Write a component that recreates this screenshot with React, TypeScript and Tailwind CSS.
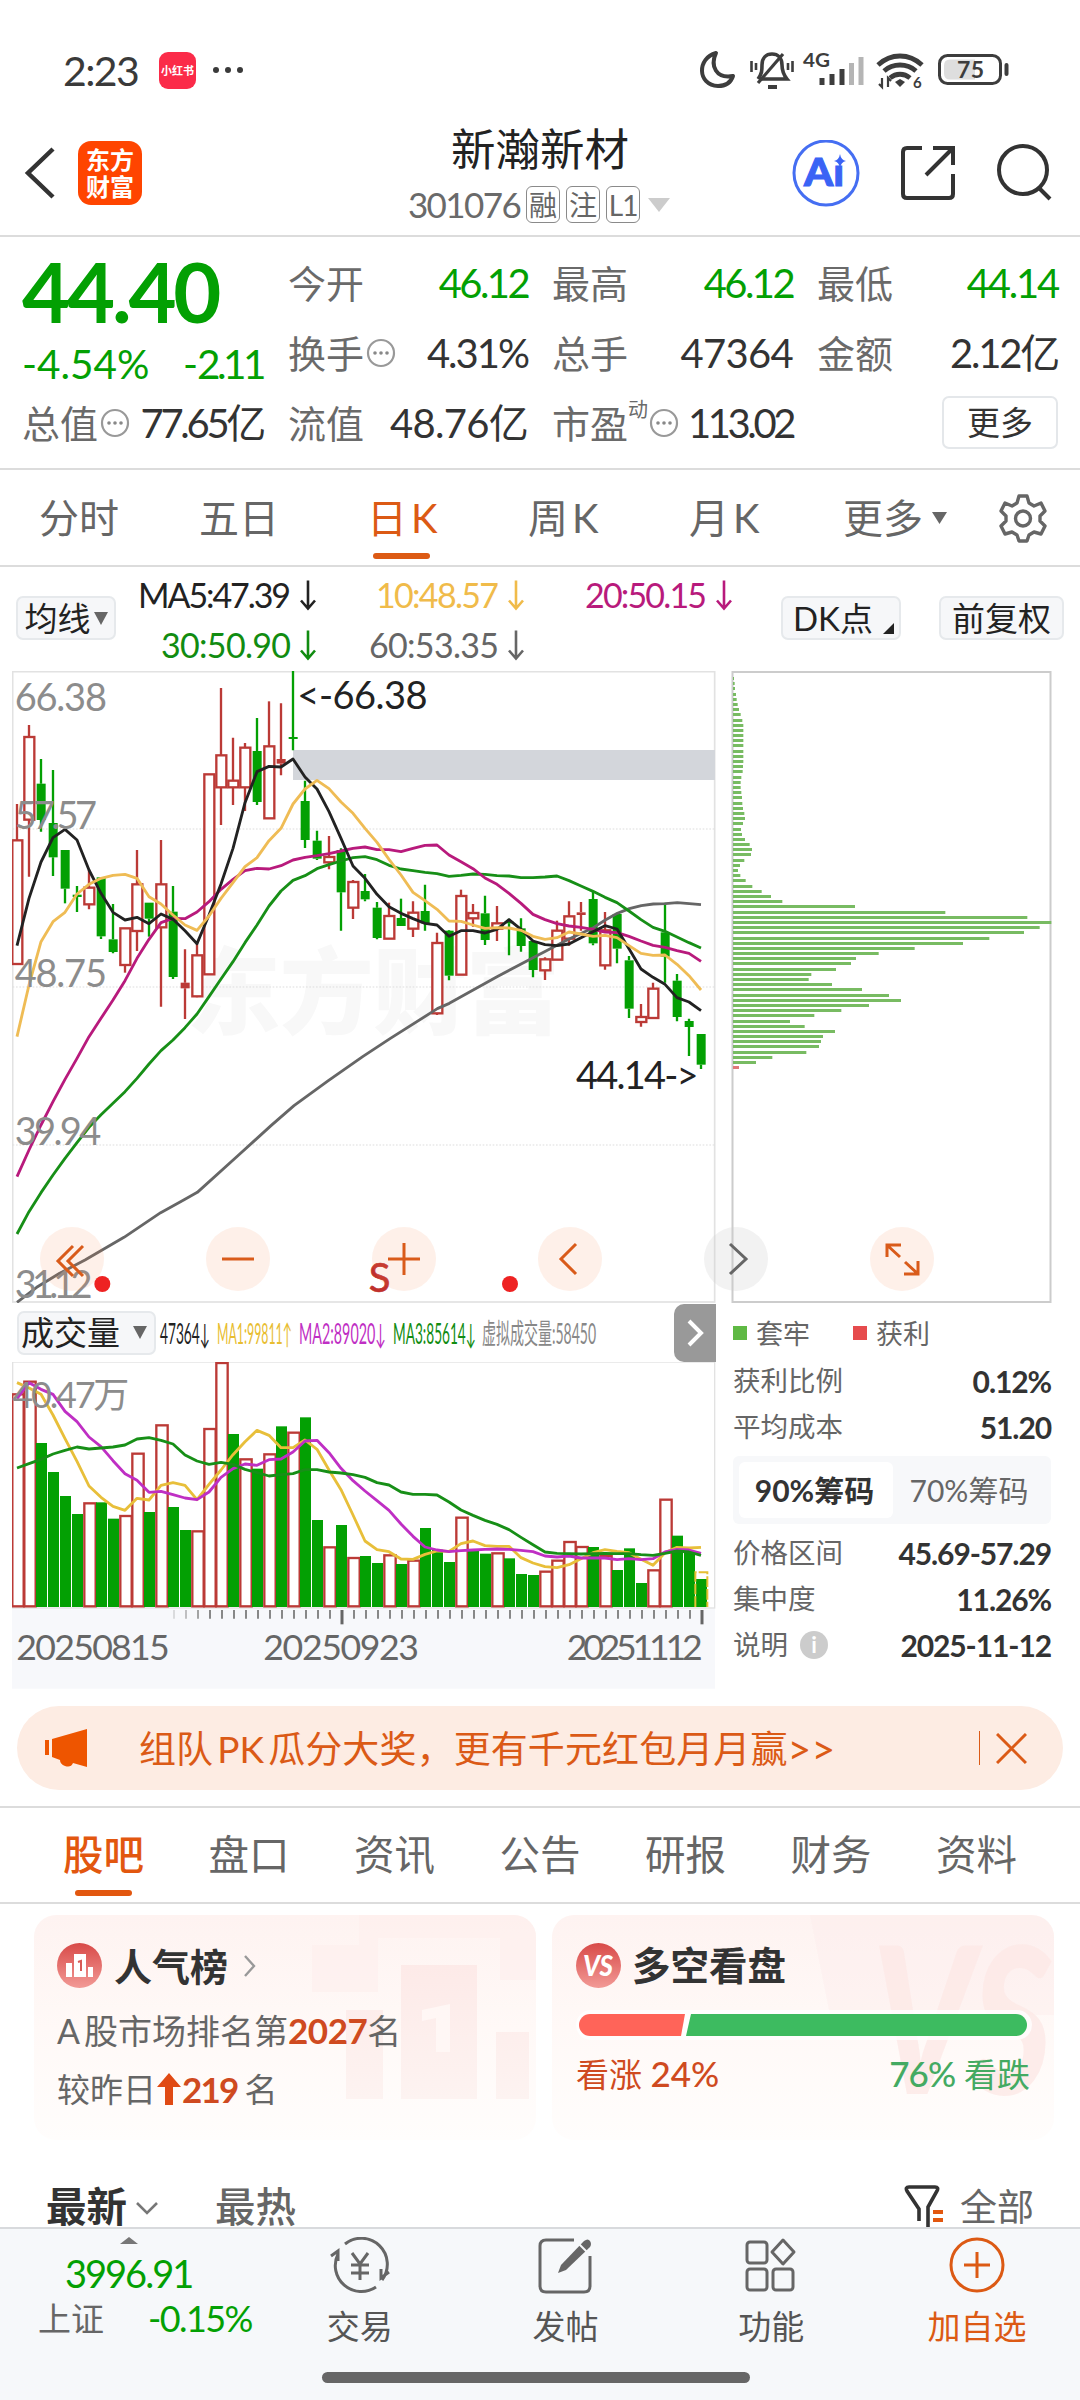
import type { ReactNode } from 'react'

type Kind = 'r' | 'g' | 's'
type Candle = [Kind, number, number, number, number]

// [kind, high, body top, body bottom, low] in chart units; r = hollow, g = falling, s = solid red
const CANDLES: Candle[] = [
  ['r', 432, 540, 911, 911], ['r', 195, 230, 478, 650], ['g', 297, 371, 480, 515], ['g', 330, 489, 592, 648],
  ['g', 570, 570, 686, 730], ['g', 678, 704, 711, 756], ['r', 630, 682, 732, 748], ['g', 652, 652, 829, 837],
  ['g', 732, 838, 876, 880], ['r', 804, 804, 914, 938], ['r', 570, 672, 812, 873], ['g', 728, 728, 776, 830],
  ['r', 540, 672, 801, 1040], ['g', 678, 755, 951, 957], ['s', 868, 968, 985, 1077], ['r', 850, 885, 1008, 1012],
  ['r', 342, 342, 942, 942], ['r', 84, 285, 381, 495], ['r', 233, 361, 381, 435], ['r', 249, 262, 381, 453],
  ['g', 174, 273, 426, 435], ['r', 124, 258, 474, 474], ['s', 130, 297, 311, 346], ['g', 33, 231, 237, 271],
  ['g', 362, 423, 540, 564], ['g', 512, 542, 596, 600], ['r', 528, 590, 606, 628], ['g', 565, 570, 697, 812],
  ['r', 660, 665, 742, 777], ['g', 642, 693, 718, 724], ['g', 726, 743, 834, 838], ['r', 728, 767, 835, 835],
  ['g', 716, 774, 798, 798], ['r', 724, 757, 805, 831], ['g', 674, 753, 790, 812], ['r', 818, 848, 1059, 1065],
  ['g', 810, 812, 947, 961], ['r', 689, 707, 943, 943], ['r', 732, 758, 774, 800], ['g', 707, 760, 840, 855],
  ['r', 738, 789, 805, 843], ['g', 776, 785, 790, 886], ['g', 775, 805, 858, 875], ['g', 840, 843, 930, 952],
  ['r', 892, 897, 930, 960], ['r', 782, 811, 898, 898], ['r', 724, 768, 835, 857], ['s', 726, 757, 765, 812],
  ['g', 695, 717, 850, 856], ['r', 756, 810, 915, 929], ['g', 760, 762, 866, 910], ['g', 888, 901, 1046, 1074],
  ['r', 1032, 1070, 1085, 1100], ['r', 968, 985, 1073, 1076], ['g', 728, 817, 890, 968], ['g', 942, 962, 1071, 1084],
  ['g', 1076, 1083, 1101, 1188], ['g', 1122, 1122, 1214, 1227],
]

const MA5 = [857, 715, 606, 533, 508, 540, 630, 700, 757, 780, 772, 791, 762, 778, 812, 851, 765, 672, 565, 428, 335, 319, 321, 297, 351, 387, 455, 535, 618, 655, 703, 740, 760, 776, 790, 795, 829, 812, 812, 819, 808, 779, 808, 843, 854, 857, 852, 833, 815, 797, 807, 866, 927, 952, 973, 1013, 1026, 1052]
const MA10 = [1130, 975, 845, 785, 757, 702, 673, 655, 646, 643, 655, 710, 732, 765, 795, 811, 768, 715, 668, 620, 593, 542, 505, 432, 387, 361, 386, 426, 460, 505, 547, 598, 645, 697, 722, 748, 783, 784, 795, 805, 803, 804, 811, 829, 838, 833, 816, 822, 829, 826, 833, 857, 880, 886, 885, 913, 947, 990]
const MA20 = [1550, 1470, 1395, 1325, 1258, 1195, 1130, 1075, 1020, 962, 895, 838, 788, 775, 776, 756, 725, 688, 658, 632, 625, 627, 617, 600, 592, 587, 581, 573, 565, 561, 569, 569, 575, 565, 556, 555, 585, 605, 626, 654, 673, 700, 730, 763, 779, 791, 798, 802, 808, 816, 818, 829, 843, 856, 862, 872, 880, 904]
const MA30 = [1722, 1655, 1598, 1545, 1495, 1448, 1402, 1364, 1330, 1295, 1255, 1212, 1172, 1140, 1103, 1062, 1010, 957, 905, 848, 795, 738, 693, 661, 647, 626, 614, 603, 593, 590, 599, 616, 627, 632, 637, 641, 649, 646, 642, 643, 647, 648, 653, 653, 651, 648, 662, 678, 694, 712, 728, 753, 779, 802, 814, 831, 848, 864]
const MA60 = '51,1927 110,1882 179,1840 255,1800 372,1732 482,1658 551,1620 592,1597 716,1485 771,1435 813,1397 882,1337 985,1262 1088,1190 1170,1136 1312,1046 1348,1030 1491,950 1599,893 1707,837 1780,803 1816,780 1852,760 1888,746 1924,737 1960,732 1996,731 2032,728 2068,731 2103,734'

const VOLUME = 'r160 r122 g309 g396 g468 g522 r487 g487 g536 r525 r338 g516 r253 g501 g570 r571 r264 r66 g282 r355 g386 r340 g259 r275 g232 g540 r619 g555 r651 g648 g669 r643 g672 r659 g564 g629 g666 r530 g632 g641 r637 g655 g702 g705 r692 r659 r603 r618 g621 r645 g690 g625 g729 r688 r476 g587 g637 g717'
  .split(' ')
  .map((v) => ({ up: v[0] === 'r', top: Number(v.slice(1)) }))
const VMA1 = [128, 144, 163, 225, 296, 364, 438, 472, 499, 511, 475, 480, 436, 428, 436, 479, 433, 390, 344, 305, 271, 286, 323, 323, 300, 328, 390, 449, 525, 603, 629, 635, 657, 658, 643, 633, 634, 611, 603, 617, 619, 619, 653, 669, 680, 683, 674, 656, 638, 629, 634, 638, 658, 676, 638, 622, 624, 622]
const VMA2 = [176, 128, 148, 163, 214, 245, 291, 320, 362, 401, 421, 457, 454, 464, 474, 479, 456, 412, 386, 372, 376, 359, 357, 336, 303, 301, 338, 385, 422, 453, 482, 511, 552, 589, 621, 630, 635, 632, 630, 628, 627, 628, 631, 635, 648, 651, 648, 654, 654, 654, 659, 656, 659, 656, 636, 628, 630, 640]
const VMA3 = [384, 371, 358, 342, 331, 321, 327, 324, 321, 315, 297, 293, 301, 312, 345, 363, 373, 367, 373, 388, 398, 408, 404, 401, 389, 389, 396, 399, 404, 412, 428, 435, 456, 463, 463, 465, 486, 510, 526, 541, 553, 569, 592, 614, 636, 640, 641, 642, 641, 640, 641, 641, 644, 646, 640, 633, 636, 646]

const CHIPS = [3, 5, 6, 9, 11, 14, 18, 23, 28, 31, 31, 31, 31, 31, 31, 31, 31, 30, 29, 25, 23, 23, 25, 27, 28, 30, 34, 36, 30, 24, 27, 36, 50, 57, 54, 34, 21, 15, 22, 38, 58, 86, 114, 148, 366, 637, 883, 955, 920, 873, 769, 690, 545, 437, 369, 354, 309, 235, 227, 297, 387, 468, 504, 408, 325, 244, 171, 215, 306, 270, 264, 258, 220, 118, 69, 18]

const cx = (i: number) => 51 + 36 * i
const line = (values: number[]) => values.map((v, i) => `${cx(i)},${v}`).join(' ')

const RED = '#bb3a36'
const GREEN = '#03a003'

function StatusBar() {
  return (
    <div className="flex h-[140px] items-center px-[63px]">
      <span className="w-[96px] text-[41px] leading-none tracking-[-1.600px] text-[#3a3a3a]">2:23</span>
      <span className="flex size-[37px] items-center justify-center rounded-[9px] bg-[#fb2b49] text-[11px] leading-none font-bold text-white">小红书</span>
      <span className="ml-[17px] flex gap-[6px]">
        <i className="size-[6px] rounded-full bg-[#3a3a3a]" />
        <i className="size-[6px] rounded-full bg-[#3a3a3a]" />
        <i className="size-[6px] rounded-full bg-[#3a3a3a]" />
      </span>
      <svg className="mr-[3px] ml-auto" width="316" height="44" viewBox="698 48 316 44" fill="none" stroke="#3d3d3d" strokeWidth="4">
        <path d="M716 53C697 58 697 85 718 86c8 0 13-4 15-10-17 3-23-10-17-23Z" strokeLinejoin="round" />
        <path d="M760 79h27c-4-5-5-9-5-14 0-7-4-11-10-11s-10 4-10 11c0 5 0 9-4 14" strokeWidth="3.6" />
        <path d="M783 54 758 83" strokeWidth="3.2" />
        <path d="M768 87h9" strokeWidth="4" />
        <path d="M751.500 61v11M756 63v7M792.500 61v11M788 63v7" strokeWidth="2.600" />
        <text x="803" y="67" fontSize="19" fontWeight="700" fill="#3d3d3d" stroke="none" textLength="27" lengthAdjust="spacingAndGlyphs">4G</text>
        <path d="M822 78v7M832 74v11M842 69v16" strokeWidth="5" />
        <path d="M851.500 63v22M861 57v28" stroke="#b5b5b5" strokeWidth="5" />
        <path d="M878 65c13-12 31-12 44 0M884 71c9-8 23-8 32 0M890 78c6-5 14-5 20 0" strokeWidth="4.800" />
        <path d="m895 82 5-3 5 3-5 5Z" fill="#3d3d3d" stroke="none" />
        <path d="M882 78v9l-3-3M888 87v-9l3 3" strokeWidth="2.200" />
        <text x="913" y="88" fontSize="15" fontWeight="700" fill="#3d3d3d" stroke="none">6</text>
        <rect x="939.500" y="55.500" width="61" height="28" rx="8" strokeWidth="3" />
        <path d="M950 59.500h25v20h-25q-6 0-6-6v-8q0-6 6-6Z" fill="#dedede" stroke="none" />
        <path d="M1006.500 65v9" strokeWidth="4" strokeLinecap="round" />
        <text x="957" y="77.500" fontSize="23" fontWeight="700" fill="#3d3d3d" stroke="none" textLength="27">75</text>
      </svg>
    </div>
  )
}

function Tag({ children }: { children: ReactNode }) {
  return <span className="flex h-[37px] w-[34px] items-center justify-center rounded-[6px] border border-[#8a8a8a] text-[28px] leading-none text-[#666]">{children}</span>
}

function Header() {
  return (
    <header className="flex h-[97px] items-start border-b-[2px] border-[#dcdcdc] pl-[24px]">
      <svg className="mt-[7px] shrink-0" width="32" height="52" viewBox="0 0 32 52" fill="none" stroke="#333" strokeWidth="4.500">
        <path d="M29 2 4 26l25 24" />
      </svg>
      <div className="mt-[1px] ml-[22px] flex size-[64px] shrink-0 flex-col items-center justify-center rounded-[13px] bg-[#ff4500] text-[24px] leading-[27px] font-bold text-white">
        <span>东方</span>
        <span>财富</span>
      </div>
      <div className="-mt-[16px] ml-[257px] flex w-[280px] flex-col items-center">
        <h1 className="pl-[2px] text-[44.500px] leading-[50px] text-[#222]">新瀚新材</h1>
        <div className="mt-[12px] flex items-center gap-[6px]">
          <span className="text-[35px] leading-[37px] tracking-[-1.600px] text-[#6a6a6a]">301076</span>
          <Tag>融</Tag>
          <Tag>注</Tag>
          <Tag><span className="tracking-[-1px]">L1</span></Tag>
          <svg className="ml-[2px]" width="22" height="14"><path d="M0 0h22L11 14Z" fill="#ccc" /></svg>
        </div>
      </div>
      <svg className="mr-[27px] ml-auto" width="262" height="68" viewBox="791 140 262 68" fill="none">
        <circle cx="826" cy="173" r="32" stroke="#456ef2" strokeWidth="3" />
        <text x="804" y="186" fontSize="37" fontWeight="900" fill="#3a63f5" stroke="#3a63f5" strokeWidth="1" textLength="40" lengthAdjust="spacingAndGlyphs">Aı</text>
        <path d="M840 154q1 6 6 7-5 1-6 7-1-6-6-7 5-1 6-7Z" fill="#3a63f5" />
        <g stroke="#333" strokeWidth="4">
          <path d="M922 148h-15q-4 0-4 4v42q0 4 4 4h42q4 0 4-4v-20M926 175l27-27M933 148h20v17" />
          <circle cx="1023" cy="170" r="24" />
          <path d="m1038 187 12 12" />
        </g>
      </svg>
    </header>
  )
}

function Dots() {
  return (
    <svg className="ml-[2px] shrink-0" width="30" height="30" viewBox="0 0 30 30">
      <circle cx="15" cy="15" r="13" fill="none" stroke="#999" strokeWidth="2.200" />
      <circle cx="9" cy="15" r="1.800" fill="#888" />
      <circle cx="15" cy="15" r="1.800" fill="#888" />
      <circle cx="21" cy="15" r="1.800" fill="#888" />
    </svg>
  )
}

interface StatProps {
  label: string
  value: string
  info?: boolean
  sup?: string
  down?: boolean
  tracking?: string
}

function Stat({ label, value, info, sup, down, tracking = 'tracking-[-1.700px]' }: StatProps) {
  return (
    <div className="flex h-[70px] items-center leading-none">
      <span className="shrink-0 text-[38px] text-[#6a6a6a]">{label}</span>
      {sup && <sup className="-top-[14px] -mr-[1px] text-[20px] text-[#6a6a6a]">{sup}</sup>}
      {info && <Dots />}
      <span className={`ml-auto text-[40px] whitespace-nowrap ${tracking} ${down ? 'text-[#03a003]' : 'text-[#333]'}`}>{value}</span>
    </div>
  )
}

function Quote() {
  return (
    <section className="flex h-[233px] border-b-[2px] border-[#dcdcdc] pt-[11px] pl-[22px] text-[#333]">
      <div className="w-[241px]">
        <div className="flex h-[86px] items-center text-[83px] leading-none font-bold tracking-[-3.200px] text-[#03a003]">44.40</div>
        <div className="flex h-[54px] items-center justify-between pt-[6px] text-[40.500px] leading-none text-[#03a003]">
          <span>-4.54%</span>
          <span className="tracking-[-3.500px]"><span className="tracking-[-1px]">-</span>2.11</span>
        </div>
        <Stat label="总值" value="77.65亿" info tracking="tracking-[-3.300px]" />
      </div>
      <div className="ml-[25px] w-[240px]">
        <Stat label="今开" value="46.12" down tracking="tracking-[-2.600px]" />
        <Stat label="换手" value="4.31%" info tracking="tracking-[-2px]" />
        <Stat label="流值" value="48.76亿" tracking="tracking-[-0.700px]" />
      </div>
      <div className="ml-[24px] w-[241px]">
        <Stat label="最高" value="46.12" down tracking="tracking-[-2.600px]" />
        <Stat label="总手" value="47364" tracking="tracking-[-0.700px]" />
        <Stat label="市盈" value="113.02" sup="动" info tracking="tracking-[-3.400px]" />
      </div>
      <div className="ml-[24px] w-[241px]">
        <Stat label="最低" value="44.14" down tracking="tracking-[-2.200px]" />
        <Stat label="金额" value="2.12亿" tracking="tracking-[-2.200px]" />
        <div className="flex h-[68px] items-center justify-end">
          <button className="h-[53px] w-[116px] rounded-[7px] border-[2px] border-[#e4e7ea] text-[33px] leading-none">更多</button>
        </div>
      </div>
    </section>
  )
}

function PeriodTabs() {
  return (
    <nav className="relative flex h-[97px] items-center border-b-[2px] border-[#dcdcdc] text-[40px] leading-none text-[#666]">
      <span className="ml-[39px] w-[160px]">分时</span>
      <span className="w-[168px]">五日</span>
      <span className="w-[161px] tracking-[4px] text-[#dc5a14]">日K</span>
      <span className="w-[161px] tracking-[4px]">周K</span>
      <span className="w-[154px] tracking-[4px]">月K</span>
      <span>更多</span>
      <svg className="ml-[9px]" width="15" height="12"><path d="M0 0h15L7.500 12Z" fill="#666" /></svg>
      <svg className="ml-[51px]" width="50" height="50" viewBox="0 0 50 50" fill="none" stroke="#666" strokeWidth="3.400" strokeLinejoin="round">
        <path d="M21 3h8l2 7 5 3 7-3 4 8-5 5v5l5 5-4 8-7-2-5 3-2 6h-8l-2-6-5-3-7 2-4-8 5-5v-5l-5-5 4-8 7 3 5-3Z" />
        <circle cx="25" cy="25.500" r="7.500" />
      </svg>
      <i className="absolute bottom-[6px] left-[373px] h-[6px] w-[57px] rounded-full bg-[#dc5a14]" />
    </nav>
  )
}

const PILL = 'flex h-[44px] items-center rounded-[7px] border-[2px] border-[#e6e9ec] bg-[#f6f7f9] text-[33px] leading-none text-[#222]'

function MaLegend() {
  return (
    <div className="flex h-[104px] items-start pl-[16px] text-[33px] leading-none">
      <div className={`mt-[29px] w-[100px] justify-center ${PILL}`}>
        均线
        <svg className="ml-[3px]" width="14" height="13"><path d="M0 0h14L7 13Z" fill="#666" /></svg>
      </div>
      <svg className="mt-[7px] ml-[14px]" width="620" height="92" viewBox="130 573.500 620 92" fontSize="34">
        <LegendText x={138} y={607} w={153} color="#222">MA5:47.39</LegendText>
        <LegendText x={161} y={657} w={130} color="#118c11">30:50.90</LegendText>
        <LegendText x={376} y={607} w={123} color="#f0bb4a">10:48.57</LegendText>
        <LegendText x={369} y={657} w={130} color="#666">60:53.35</LegendText>
        <LegendText x={585} y={607} w={122} color="#b81a7c">20:50.15</LegendText>
      </svg>
      <div className={`relative mt-[29px] ml-[31px] w-[120px] pl-[10px] ${PILL}`}>
        <span className="text-[33px]">DK点</span>
        <svg className="absolute right-[5px] bottom-[4px]" width="11" height="11"><path d="M11 0v11H0Z" fill="#222" /></svg>
      </div>
      <div className={`mt-[29px] ml-[38px] w-[125px] justify-center ${PILL}`}>前复权</div>
    </div>
  )
}

function LegendText({ x, y, w, color, children }: { x: number; y: number; w: number; color: string; children: string }) {
  const ax = x + w + 17
  return (
    <g>
      <text x={x} y={y} textLength={w} fill={color}>{children}</text>
      <path d={`M${ax} ${y - 27}v28M${ax - 7} ${y - 7}l7 8 7-8`} fill="none" stroke={color} strokeWidth="2.600" />
    </g>
  )
}

function CandleChart() {
  return (
    <svg width="704" height="632" viewBox="36 33 2112 1896" fontSize="114">
      <rect x="38" y="35" width="2106" height="1891" fill="#fff" stroke="#e2e2e2" strokeWidth="5" />
      <text x="560" y="1100" fontSize="282" fontWeight="900" fill="#f8f8f8" textLength="1120">东方财富</text>
      <path d="M38 507h2106M38 981h2106M38 1455h2106" stroke="#ddd" strokeWidth="3" strokeDasharray="5 5" />
      <rect x="879" y="270" width="1266" height="90" fill="#d3d6db" />
      {CANDLES.map(([kind, high, top, bottom, low], i) => {
        const color = kind === 'g' ? GREEN : RED
        return (
          <g key={i} stroke={color} strokeWidth="7">
            <path d={`M${cx(i)} ${high}V${top}M${cx(i)} ${bottom}V${low}`} />
            <rect
              x={cx(i) - (kind === 'r' ? 14 : 13)}
              y={kind === 'r' ? top + 1 : top}
              width={kind === 'r' ? 30 : 27}
              height={bottom - top}
              fill={kind === 'r' ? '#fff' : color}
              strokeWidth={kind === 'r' ? 7 : 0}
            />
          </g>
        )
      })}
      <g fill="none" strokeWidth="8.500" strokeLinejoin="round">
        <polyline points={MA60} stroke="#666" />
        <polyline points={line(MA30)} stroke="#178f17" />
        <polyline points={line(MA20)} stroke="#b81a7c" />
        <polyline points={line(MA5)} stroke="#222" />
        <polyline points={line(MA10)} stroke="#efbc55" />
      </g>
      <g fill="#8c8c8c">
        <text x="44" y="154" textLength="277">66.38</text>
        <text x="44" y="508" textLength="247">57.57</text>
        <text x="44" y="982" textLength="277">48.75</text>
        <text x="44" y="1456" textLength="260">39.94</text>
        <text x="44" y="1914" textLength="234">31.12</text>
      </g>
      <g fill="#222">
        <text x="892" y="148" textLength="391">&lt;-66.38</text>
        <text x="1728" y="1288" textLength="368">44.14-&gt;</text>
      </g>
      <text x="1106" y="1896" fontSize="120" fill="#c0302c" stroke="#c0302c" strokeWidth="2">S</text>
      <circle cx="307" cy="1872" r="24" fill="#ee2222" />
      <circle cx="1530" cy="1872" r="24" fill="#ee2222" />
    </svg>
  )
}

function ChipChart() {
  return (
    <svg width="322" height="632" viewBox="731 671 322 632">
      <rect x="732.500" y="672" width="318" height="630" fill="#fff" stroke="#ccc" strokeWidth="2" />
      {CHIPS.map((len, i) => (
        <rect key={i} x="733" y={Math.round(677 + i * 5.19)} width={len / 3} height="3" fill={i === 75 ? '#e0787a' : '#78bb62'} />
      ))}
    </svg>
  )
}

function ChartButtons() {
  const icons = [
    'M33 19 18 34l15 15M43 19 28 34l15 15',
    'M16 32h32',
    'M16 32h32M32 16v32',
    'M38 17 23 32l15 15',
    'M26 17l16 15-16 15',
    'M17 30V18h14M18 19l12 11M48 34v13H34M47 46 35 35',
  ]
  return (
    <div className="absolute top-[556px] left-[40px] flex gap-[102px]">
      {icons.map((d, i) => (
        <svg key={d} width="64" height="64" viewBox="0 0 64 64" fill="none" stroke={i === 4 ? '#666' : '#d95b1a'} strokeWidth="3">
          <circle cx="32" cy="32" r="32" fill={i === 4 ? '#cccccc' : '#fa8a50'} fillOpacity={i === 4 ? 0.26 : 0.125} stroke="none" />
          <path d={d} />
        </svg>
      ))}
    </div>
  )
}

function VolumeHeader() {
  const items: [string, number, number, string][] = [
    ['47364↓', 160, 50, '#222'],
    ['MA1:99811↑', 217, 75, '#e8bd30'],
    ['MA2:89020↓', 299, 87, '#bf2fc4'],
    ['MA3:85614↓', 393, 83, '#118c11'],
    ['虚拟成交量:58450', 482, 114, '#888'],
  ]
  return (
    <div className="flex h-[59px] items-center pl-[5px]">
      <div className={`w-[139px] justify-between pr-[7px] pl-[2px] ${PILL}`}>
        成交量
        <svg width="14" height="13"><path d="M0 0h14L7 13Z" fill="#666" /></svg>
      </div>
      <svg className="ml-[2px]" width="450" height="40" viewBox="158 1312 450 40" fontSize="28">
        {items.map(([text, x, w, color]) => (
          <text key={text} x={x} y="1343" textLength={w} lengthAdjust="spacingAndGlyphs" fill={color}>{text}</text>
        ))}
      </svg>
      <div className="ml-auto flex h-[58px] w-[42px] items-center justify-center rounded-l-[10px] bg-[#999]">
        <svg width="18" height="28" viewBox="0 0 18 28" fill="none" stroke="#fff" strokeWidth="4"><path d="m3 2 12 12L3 26" /></svg>
      </div>
    </div>
  )
}

function VolumeChart() {
  return (
    <svg width="704" height="328" viewBox="36 66 2112 984" fontSize="107">
      <rect x="36" y="806" width="2109" height="240" fill="#f7f8fb" />
      <rect x="38" y="66" width="2106" height="738" fill="#fff" stroke="#e2e2e2" strokeWidth="4" />
      {VOLUME.map(({ up, top }, i) =>
        up ? (
          <rect key={i} x={cx(i) - 14} y={top + 3} width="34" height={796 - top} fill="#fff" stroke={RED} strokeWidth="7" />
        ) : (
          <rect key={i} x={cx(i) - 15} y={top} width="33" height={801 - top} fill={GREEN} />
        ),
      )}
      <path d="M2086 801V697h36v104" fill="none" stroke="#e6bf33" strokeWidth="6" strokeDasharray="32 6" />
      <g fill="none" strokeWidth="8.500" strokeLinejoin="round">
        <polyline points={line(VMA1)} stroke="#e8bf3a" />
        <polyline points={line(VMA2)} stroke="#bf2fc4" />
        <polyline points={line(VMA3)} stroke="#178f17" />
      </g>
      {VOLUME.map((_, i) => {
        const major = i === 27 || i === 57
        return (
          <path
            key={i}
            d={`M${cx(i) + 3} 810v${major ? 43 : 26}`}
            stroke={major ? '#666' : '#888'}
            strokeWidth={major ? 9 : 6}
            opacity={i < 13 ? 0 : Math.min(1, (i - 12) / 4)}
          />
        )
      })}
      <text x="37" y="204" fontSize="108" fill="#8c8c8c" textLength="351">40.47万</text>
      <g fill="#666">
        <text x="49" y="960" textLength="460">20250815</text>
        <text x="790" y="960" textLength="467">20250923</text>
        <text x="1700" y="960" textLength="408">20251112</text>
      </g>
    </svg>
  )
}

function Row({ label, value, children }: { label: string; value: string; children?: ReactNode }) {
  return (
    <div className="flex h-[46px] items-center leading-none">
      <span className="text-[27.500px] text-[#666]">{label}</span>
      {children}
      <span className="ml-auto text-[30px] font-bold tracking-[-1.100px] text-[#333]">{value}</span>
    </div>
  )
}

function ChipStats() {
  return (
    <div className="ml-[17px] w-[318px] pt-[9px]">
      <div className="flex h-[42px] items-center text-[27px] leading-none text-[#666]">
        <i className="mr-[9px] size-[14px] bg-[#5fb944]" />套牢
        <i className="mr-[9px] ml-[43px] size-[14px] bg-[#e64b4d]" />获利
      </div>
      <div className="mt-[4px]">
        <Row label="获利比例" value="0.12%" />
        <Row label="平均成本" value="51.20" />
      </div>
      <div className="mt-[6px] mb-[6px] flex h-[68px] rounded-[6px] bg-[#f7f8fa] p-[6px] text-[30px] leading-none">
        <span className="flex w-[154px] items-center justify-center rounded-[6px] bg-white pr-[3px] font-bold text-[#333]">90%筹码</span>
        <span className="flex flex-1 items-center justify-center text-[#666]">70%筹码</span>
      </div>
      <Row label="价格区间" value="45.69-57.29" />
      <Row label="集中度" value="11.26%" />
      <Row label="说明" value="2025-11-12">
        <span className="ml-[12px] flex size-[28px] items-center justify-center rounded-full bg-[#ccc] text-[22px] font-bold text-white">i</span>
      </Row>
    </div>
  )
}

function Banner() {
  return (
    <div className="mx-[17px] flex h-[84px] items-center rounded-full bg-[#fdece3] pl-[27px] text-[#db5a16]">
      <svg width="46" height="42" viewBox="0 0 46 42" fill="#ee5500">
        <path d="M1 13h4v15H1zM8 12 43 2v38l-14-4q-2 5-8 3-5-2-5-6l-8-3Z" />
      </svg>
      <span className="ml-[49px] flex items-center text-[37px] leading-none tracking-[0.100px] whitespace-nowrap">
        组队<span className="mx-[4px]">PK</span>瓜分大奖，更有千元红包月月赢<span className="text-[41px]">&gt;&gt;</span>
      </span>
      <i className="mr-[16px] ml-auto h-[34px] w-[1.500px] bg-[#db5a16]" />
      <svg className="mr-[36px]" width="31" height="31" viewBox="0 0 31 31" stroke="#db5a16" strokeWidth="3"><path d="m1 1 29 29M30 1 1 30" /></svg>
    </div>
  )
}

function SectionTabs() {
  const tabs = ['股吧', '盘口', '资讯', '公告', '研报', '财务', '资料']
  return (
    <nav className="mt-[16px] flex h-[98px] justify-between border-y-[2px] border-[#dcdcdc] px-[63px] text-[40.500px] leading-none text-[#666]">
      {tabs.map((tab, i) => (
        <span key={tab} className={`relative flex items-center ${i === 0 ? 'font-medium text-[#e2570f]' : ''}`}>
          {tab}
          {i === 0 && <i className="absolute bottom-[6px] left-[12px] h-[6px] w-[57px] rounded-full bg-[#e2570f]" />}
        </span>
      ))}
    </nav>
  )
}

function RankCard() {
  return (
    <div className="relative h-[225px] w-[502px] overflow-hidden rounded-[22px] bg-gradient-to-b from-[#fef3f1] via-[#fff9f7] to-[#fffdfc] px-[23px]">
      <svg className="absolute inset-0" width="502" height="225" viewBox="34 1915 502 225">
        <defs>
          <linearGradient id="podium" x2="0" y2="1"><stop stopColor="#fdeae8" /><stop offset="1" stopColor="#fdf3f1" /></linearGradient>
        </defs>
        <path d="M312 1945h47v-30h177v65h-36v-42H378v54h-66Z" fill="#fdefed" opacity=".6" />
        <path d="M401 1965h76v134h-76zM346 2010h37v89h-37zM496 2032h33v67h-33z" fill="url(#podium)" />
        <path d="M422 2010l28-6v48h-14v-34l-14 3Z" fill="#fff7f5" />
      </svg>
      <div className="relative box-content flex h-[45px] items-center pt-[28px]">
        <svg width="45" height="45" viewBox="0 0 45 45">
          <defs>
            <linearGradient id="rank" x2="0" y2="1"><stop stopColor="#d84a48" /><stop offset="1" stopColor="#f29a96" /></linearGradient>
          </defs>
          <circle cx="22.500" cy="22.500" r="22.500" fill="url(#rank)" />
          <path d="M17 11h12v23H17zM9 20h6v14H9zM31 24h5v10h-5z" fill="#fff" />
          <path d="m21 19 3-1v10" fill="none" stroke="#d85a56" strokeWidth="2" />
        </svg>
        <h2 className="ml-[12px] text-[38px] leading-none font-bold text-[#333]">人气榜</h2>
        <svg className="ml-[15px]" width="14" height="24" viewBox="0 0 14 24" fill="none" stroke="#999" strokeWidth="2.400"><path d="m2 2 9 10-9 10" /></svg>
      </div>
      <p className="relative mt-[24px] text-[34px] leading-[36px] whitespace-nowrap text-[#666]">
        A<span className="ml-[4px]">股市场排名第</span><b className="text-[35px] tracking-[-0.500px] text-[#cf4a20]">2027</b>名
      </p>
      <p className="relative mt-[22px] flex items-center text-[33px] leading-[36px] text-[#666]">
        较昨日
        <svg className="mx-[1px]" width="24" height="32" viewBox="0 0 24 32"><path d="M12 0l12 14h-8v18H8V14H0Z" fill="#e04a14" /></svg>
        <b className="mr-[7px] text-[35px] tracking-[-1.800px] text-[#cf4a20]">219</b>名
      </p>
    </div>
  )
}

function SentimentCard() {
  return (
    <div className="relative h-[225px] w-[502px] overflow-hidden rounded-[22px] bg-gradient-to-b from-[#fef3f1] via-[#fff9f7] to-[#fffdfc] px-[24px]">
      <svg className="absolute inset-0" width="502" height="225" viewBox="552 1915 502 225">
        <path d="M810 1915h244v100H830Z" fill="#fdecea" opacity=".4" />
        <text x="872" y="2094" fontSize="205" fontWeight="900" fontStyle="italic" fill="#fce8e6" fillOpacity=".8" textLength="180" lengthAdjust="spacingAndGlyphs">VS</text>
      </svg>
      <div className="relative box-content flex h-[45px] items-center pt-[28px]">
        <svg width="45" height="45" viewBox="0 0 45 45">
          <circle cx="22.500" cy="22.500" r="22.500" fill="url(#rank)" />
          <text x="7" y="33" fontSize="29" fontWeight="900" fontStyle="italic" fill="#fff" textLength="30" lengthAdjust="spacingAndGlyphs">VS</text>
        </svg>
        <h2 className="ml-[11px] text-[38.500px] leading-none font-bold text-[#333]">多空看盘</h2>
      </div>
      <svg className="relative mt-[22px]" width="456" height="30" viewBox="0 0 456 30">
        <rect width="456" height="30" rx="15" fill="#fff" opacity=".8" />
        <path d="M14 4h95l-4 22H14a11 11 0 0 1 0-22Z" fill="#ff6459" />
        <path d="M115 4h325a11 11 0 0 1 0 22H110Z" fill="#3dbb60" />
      </svg>
      <div className="relative mt-[14px] flex justify-between text-[33px] leading-[38px]">
        <span className="text-[#cf4a20]">看涨 <span className="text-[35px] font-medium">24%</span></span>
        <span className="text-[#44aa62]"><span className="text-[35px] font-medium tracking-[-0.800px]">76%</span> 看跌</span>
      </div>
    </div>
  )
}

function PostFilter() {
  return (
    <div className="flex h-[87px] items-start overflow-hidden pt-[46px] pl-[46px] text-[40.500px] leading-[42px] text-[#666]">
      <span className="font-bold text-[#333]">最新</span>
      <svg className="mt-[15px] ml-[9px]" width="22" height="14" viewBox="0 0 22 14" fill="none" stroke="#777" strokeWidth="2.600"><path d="m1 2 10 10L21 2" /></svg>
      <span className="ml-[57px] font-medium">最热</span>
      <svg className="-mt-[1px] ml-auto" width="44" height="50" viewBox="0 0 44 50" fill="none" stroke="#333" strokeWidth="3.600">
        <path d="M16 36V24L4 6q-2-4 2-4h26q4 0 2 4L25 22v26" />
        <path d="M30 27h10M30 35h10" stroke="#e2570f" strokeWidth="4" />
      </svg>
      <span className="mr-[46px] ml-[13px] text-[37px]">全部</span>
    </div>
  )
}

function NavItem({ label, active, children }: { label: string; active?: boolean; children: ReactNode }) {
  const color = active ? '#dc5a14' : '#666'
  return (
    <div className="flex w-[206px] flex-col items-center pt-[8px]">
      <svg width="62" height="58" viewBox="0 0 62 58" fill="none" stroke={color} strokeWidth="3">{children}</svg>
      <span className={`mt-[12px] text-[33px] leading-[38px] ${active ? 'text-[#dc5a14]' : 'text-[#555]'}`}>{label}</span>
    </div>
  )
}

function BottomBar() {
  return (
    <footer className="h-[173px] border-t-[2px] border-[#d8dadd] bg-[#f6f8fa]">
      <div className="flex h-[143px]">
        <div className="w-[257px] pt-[8px]">
          <svg className="ml-[120px]" width="18" height="7"><path d="M9 0l9 7H0Z" fill="#777" /></svg>
          <div className="mt-[10px] ml-[65px] text-[38px] leading-[38px] tracking-[-2px] text-[#03a003]">3996.91</div>
          <div className="mt-[7px] flex items-center text-[33px] leading-[38px] text-[#666]">
            <span className="ml-[38px]">上证</span>
            <span className="ml-[44px] text-[36px] tracking-[-1.600px] text-[#03a003]">-0.15%</span>
          </div>
        </div>
        <NavItem label="交易">
          <path d="M16 7a26 26 0 0 1 37 36M47 50A26 26 0 0 1 9 17M2 19l7-5v10M60 35l-8 6v-9" />
          <path d="m23 16 8 11 8-11M31 27v16M22 28h18M22 36h18" />
        </NavItem>
        <NavItem label="发帖">
          <path d="M40 3H12q-6 0-6 6v40q0 6 6 6h38q6 0 6-6V19" />
          <path d="m24 36 3-8L50 4q4-3 6 0t0 6L32 33Z" fill="#666" stroke="none" />
          <path d="m45 7 8 8" stroke="#f6f8fa" strokeWidth="2" />
        </NavItem>
        <NavItem label="功能">
          <rect x="7" y="5" width="20" height="21" rx="3" />
          <rect x="7" y="32" width="20" height="21" rx="3" />
          <rect x="33" y="32" width="20" height="21" rx="3" />
          <path d="m43 3 11 12-11 12-11-12Z" strokeLinejoin="round" />
        </NavItem>
        <NavItem label="加自选" active>
          <circle cx="31" cy="28" r="26" />
          <path d="M18 28h26M31 15v26" />
        </NavItem>
      </div>
      <div className="mx-auto h-[11px] w-[428px] -translate-x-[4px] rounded-full bg-[#666]" />
    </footer>
  )
}

export default function App() {
  return (
    <div className="flex h-[2400px] w-[1080px] flex-col overflow-hidden bg-white font-[Lato,'Noto_Sans_CJK_SC',sans-serif]">
      <StatusBar />
      <Header />
      <Quote />
      <PeriodTabs />
      <MaLegend />
      <div className="relative flex h-[632px] gap-[15px] pl-[12px]">
        <CandleChart />
        <ChipChart />
        <ChartButtons />
      </div>
      <div className="flex h-[403px] pl-[12px]">
        <div className="w-[704px]">
          <VolumeHeader />
          <VolumeChart />
        </div>
        <ChipStats />
      </div>
      <Banner />
      <SectionTabs />
      <div className="mt-[11px] flex justify-between pr-[26px] pl-[34px]">
        <RankCard />
        <SentimentCard />
      </div>
      <PostFilter />
      <BottomBar />
    </div>
  )
}
